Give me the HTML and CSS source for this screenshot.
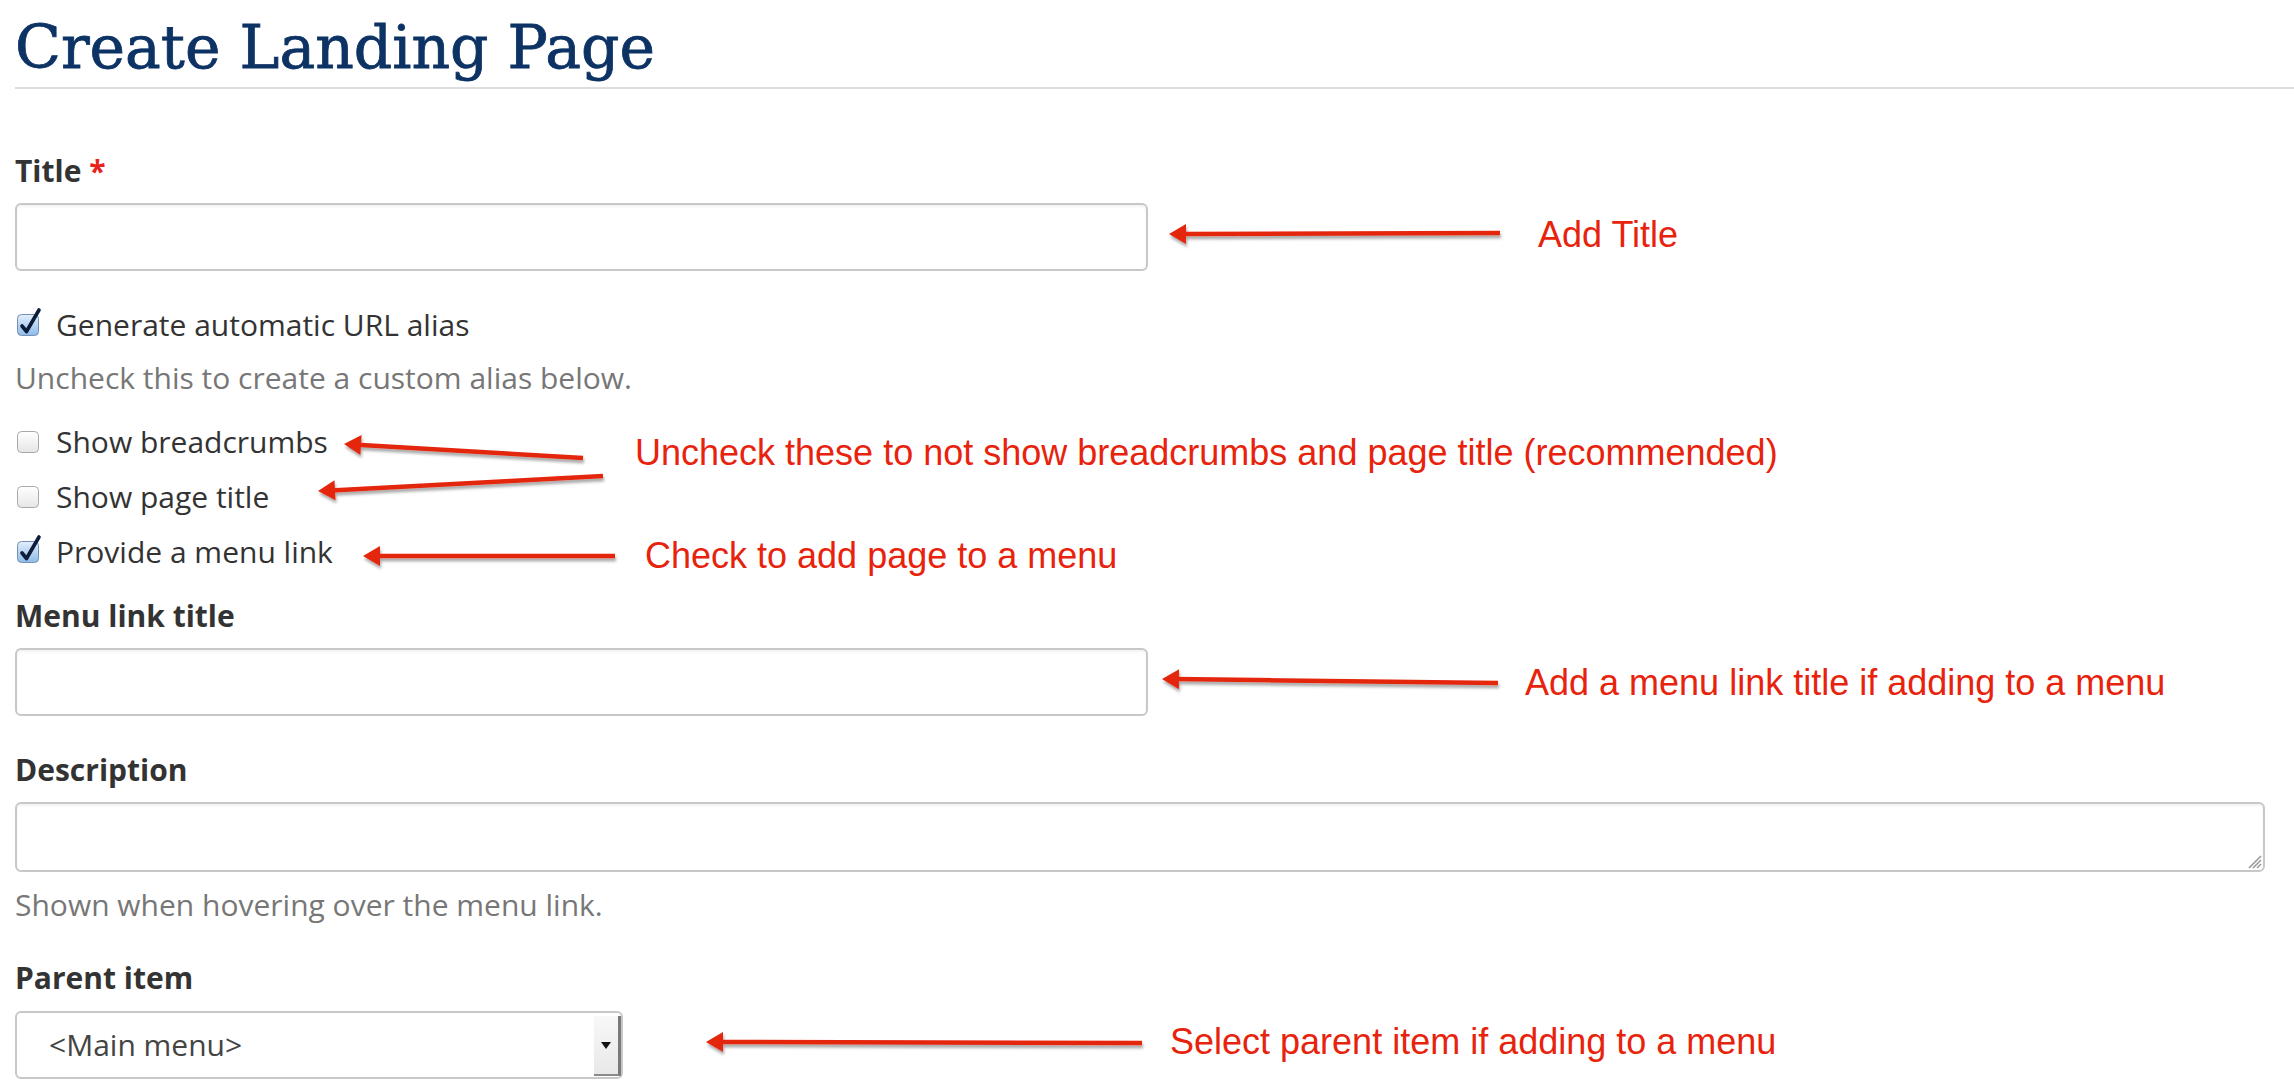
FILE: index.html
```html
<!DOCTYPE html>
<html lang="en">
<head>
<meta charset="utf-8">
<title>Create Landing Page</title>
<link rel="stylesheet" href="styles.css">
</head>
<body>
<div class="page">
  <h1 class="page-title">Create Landing Page</h1>

  <form class="form">
    <div class="field">
      <div class="label">Title <span class="req">*</span></div>
      <div class="text-input"></div>
    </div>

    <div class="check-row">
      <span class="cb">
        <svg width="22" height="22" viewBox="0 0 22 22" overflow="visible">
          <defs>
            <linearGradient id="cbOn" x1="0" y1="0" x2="0" y2="1">
              <stop offset="0" stop-color="#e4effb"/>
              <stop offset="1" stop-color="#8dbbea"/>
            </linearGradient>
          </defs>
          <rect x="0.5" y="0.5" width="21" height="21" rx="4" fill="url(#cbOn)" stroke="#7590b0"/>
          <path d="M5 12 L9.5 17.5 L22 -4" fill="none" stroke="#0c1d3a" stroke-width="3.6" stroke-linecap="round" stroke-linejoin="round"/>
        </svg>
      </span>
      <span>Generate automatic URL alias</span>
    </div>
    <div class="help help-alias">Uncheck this to create a custom alias below.</div>

    <div class="check-row row-first">
      <span class="cb">
        <svg width="22" height="22" viewBox="0 0 22 22">
          <defs>
            <linearGradient id="cbOff" x1="0" y1="0" x2="0" y2="1">
              <stop offset="0" stop-color="#ffffff"/>
              <stop offset="1" stop-color="#e6e6e6"/>
            </linearGradient>
          </defs>
          <rect x="0.5" y="0.5" width="21" height="21" rx="4" fill="url(#cbOff)" stroke="#a9a9a9"/>
        </svg>
      </span>
      <span>Show breadcrumbs</span>
    </div>
    <div class="check-row row-next">
      <span class="cb">
        <svg width="22" height="22" viewBox="0 0 22 22">
          <rect x="0.5" y="0.5" width="21" height="21" rx="4" fill="url(#cbOff)" stroke="#a9a9a9"/>
        </svg>
      </span>
      <span>Show page title</span>
    </div>
    <div class="check-row row-next">
      <span class="cb">
        <svg width="22" height="22" viewBox="0 0 22 22" overflow="visible">
          <rect x="0.5" y="0.5" width="21" height="21" rx="4" fill="url(#cbOn)" stroke="#7590b0"/>
          <path d="M5 12 L9.5 17.5 L22 -4" fill="none" stroke="#0c1d3a" stroke-width="3.6" stroke-linecap="round" stroke-linejoin="round"/>
        </svg>
      </span>
      <span>Provide a menu link</span>
    </div>

    <div class="field field-menu">
      <div class="label">Menu link title</div>
      <div class="text-input"></div>
    </div>

    <div class="field-desc">
      <div class="label">Description</div>
      <div class="textarea">
        <svg class="grip" width="18" height="18" viewBox="0 0 18 18">
          <path d="M17 5 L5 17 M17 9 L9 17 M17 13 L13 17" stroke="#9a9a9a" stroke-width="1.6"/>
        </svg>
      </div>
    </div>
    <div class="help help-desc">Shown when hovering over the menu link.</div>

    <div class="field-parent">
      <div class="label label-parent">Parent item</div>
      <div class="select">
        <span class="select-text">&lt;Main menu&gt;</span>
        <span class="select-btn"><span class="caret"></span></span>
      </div>
    </div>
  </form>

  <div class="annotations">
    <svg class="arrows" width="2294" height="1092" viewBox="0 0 2294 1092">
      <defs>
        <filter id="sh" x="-10%" y="-100%" width="120%" height="300%">
          <feDropShadow dx="1" dy="3" stdDeviation="1.6" flood-color="#000" flood-opacity="0.35"/>
        </filter>
      </defs>
      <g fill="#e4260f" stroke="#e4260f" filter="url(#sh)">
        <line x1="1500" y1="233" x2="1182" y2="234" stroke-width="4.5"/>
        <polygon points="1169,234 1186,224 1186,244" stroke="none"/>

        <line x1="583" y1="458" x2="357" y2="444.7" stroke-width="4.5"/>
        <polygon points="344,444 361.6,435 360.4,455" stroke="none"/>

        <line x1="603" y1="476" x2="331" y2="490.4" stroke-width="4.5"/>
        <polygon points="318,491 334.5,480.2 335.5,500.2" stroke="none"/>

        <line x1="615" y1="556" x2="376" y2="556" stroke-width="4.5"/>
        <polygon points="363,556 380,546 380,566" stroke="none"/>

        <line x1="1498" y1="683" x2="1175" y2="679.1" stroke-width="4.5"/>
        <polygon points="1162,679 1179.1,669.2 1178.9,689.2" stroke="none"/>

        <line x1="1142" y1="1043" x2="719" y2="1042" stroke-width="4.5"/>
        <polygon points="706,1042 723,1032 723,1052" stroke="none"/>
      </g>
    </svg>
    <div class="note note-title">Add Title</div>
    <div class="note note-uncheck">Uncheck these to not show breadcrumbs and page title (recommended)</div>
    <div class="note note-check">Check to add page to a menu</div>
    <div class="note note-menu">Add a menu link title if adding to a menu</div>
    <div class="note note-parent">Select parent item if adding to a menu</div>
  </div>
</div>
</body>
</html>
```

FILE: styles.css
```css
html, body {
  margin: 0;
  padding: 0;
  background: #ffffff;
}

.page {
  position: relative;
  width: 2294px;
  height: 1092px;
  box-sizing: border-box;
  padding: 17px 0 0 15px;
  overflow: hidden;
}

.page-title {
  margin: 0;
  padding-bottom: 10px;
  border-bottom: 2px solid #dddddd;
  font-family: "DejaVu Serif", serif;
  font-weight: 400;
  font-size: 60px;
  line-height: 60px;
  color: #0d3264;
  -webkit-text-stroke: 0.8px #0d3264;
}

.form {
  margin-top: 62px;
  padding-right: 29px;
  font-family: "Open Sans", sans-serif;
  font-size: 30px;
  line-height: 40px;
  color: #333333;
}

.label {
  font-weight: 700;
  margin-bottom: 12px;
  color: #333333;
}

.req {
  color: #e8231b;
}

.field {
  margin-bottom: 34px;
}

.field-menu {
  margin-top: 24px;
  margin-bottom: 34px;
}

.text-input {
  width: 1133px;
  height: 68px;
  box-sizing: border-box;
  border: 2px solid #c8c8c8;
  border-radius: 6px;
  background: #ffffff;
  box-shadow: inset 0 2px 3px rgba(0, 0, 0, 0.05);
}

.check-row {
  display: flex;
  align-items: center;
  gap: 17px;
  height: 40px;
  padding-left: 2px;
}

.cb {
  display: flex;
  width: 22px;
  height: 22px;
}

.cb svg {
  display: block;
}

.row-first {
  margin-top: 24px;
}

.row-next {
  margin-top: 15px;
}

.help {
  color: #777777;
}

.help-alias {
  margin-top: 13px;
}

.help-desc {
  margin-top: 13px;
}

.textarea {
  position: relative;
  height: 70px;
  box-sizing: border-box;
  border: 2px solid #c8c8c8;
  border-radius: 6px;
  background: #ffffff;
  box-shadow: inset 0 2px 3px rgba(0, 0, 0, 0.05);
}

.grip {
  position: absolute;
  right: 1px;
  bottom: 1px;
}

.field-parent {
  margin-top: 33px;
}

.label-parent {
  margin-bottom: 13px;
}

.select {
  display: flex;
  width: 608px;
  height: 68px;
  box-sizing: border-box;
  border: 2px solid #c8c8c8;
  border-radius: 6px;
  background: #ffffff;
}

.select-text {
  flex: 1;
  padding-left: 32px;
  line-height: 64px;
  color: #444444;
}

.select-btn {
  display: flex;
  align-items: center;
  justify-content: center;
  width: 24px;
  margin: 3px 0 1px 0;
  background: linear-gradient(#f8f8f8, #e8e8e8);
  border-right: 3px solid #7a7a7a;
  border-bottom: 2px solid #8a8a8a;
}

.caret {
  width: 0;
  height: 0;
  border-left: 5px solid transparent;
  border-right: 5px solid transparent;
  border-top: 7px solid #111111;
}

.annotations {
  position: absolute;
  left: 0;
  top: 0;
  width: 2294px;
  height: 1092px;
  pointer-events: none;
}

.arrows {
  position: absolute;
  left: 0;
  top: 0;
}

.note {
  position: absolute;
  white-space: nowrap;
  font-family: "Liberation Sans", Arial, sans-serif;
  font-size: 36px;
  line-height: 36px;
  color: #e8230d;
}

.note-title {
  left: 1538px;
  top: 217px;
}

.note-uncheck {
  left: 635px;
  top: 435px;
}

.note-check {
  left: 645px;
  top: 538px;
}

.note-menu {
  left: 1525px;
  top: 665px;
}

.note-parent {
  left: 1170px;
  top: 1024px;
}
```
